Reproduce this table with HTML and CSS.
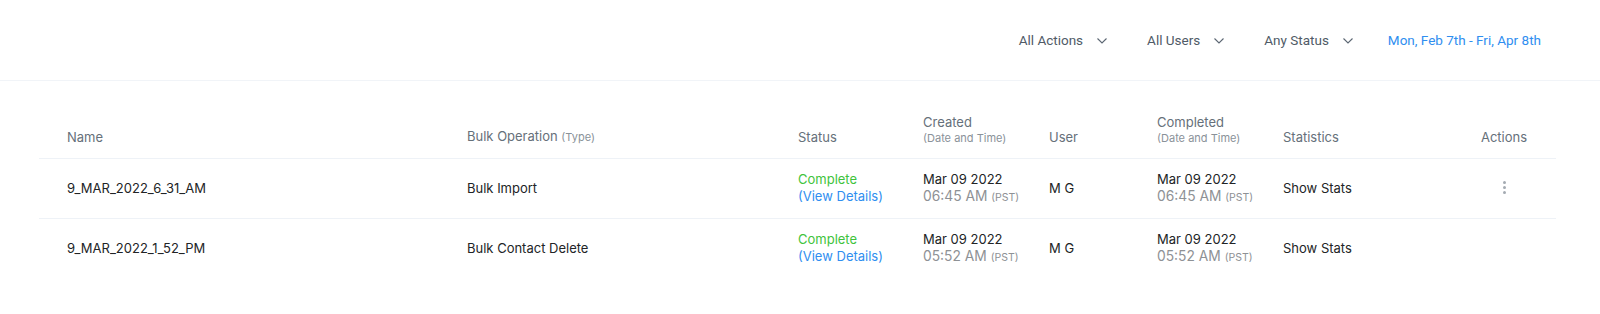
FILE: index.html
```html
<!DOCTYPE html>
<html>
<head>
<meta charset="utf-8">
<link rel="stylesheet" href="styles.css">
</head>
<body>
<header class="topbar">
  <div class="filters">
    <div class="filter">All Actions <svg class="chev" viewBox="0 0 10 6" width="10" height="6"><path d="M0.5 0.5 L5 5 L9.5 0.5" fill="none" stroke="#5b6672" stroke-width="1.1"/></svg></div>
    <div class="filter">All Users <svg class="chev" viewBox="0 0 10 6" width="10" height="6"><path d="M0.5 0.5 L5 5 L9.5 0.5" fill="none" stroke="#5b6672" stroke-width="1.1"/></svg></div>
    <div class="filter">Any Status <svg class="chev" viewBox="0 0 10 6" width="10" height="6"><path d="M0.5 0.5 L5 5 L9.5 0.5" fill="none" stroke="#5b6672" stroke-width="1.1"/></svg></div>
    <div class="daterange">Mon, Feb 7th - Fri, Apr 8th</div>
  </div>
</header>
<main class="content">
  <table class="ops">
    <colgroup>
      <col class="c-name"><col class="c-op"><col class="c-status"><col class="c-created"><col class="c-user"><col class="c-completed"><col class="c-stats"><col class="c-actions">
    </colgroup>
    <thead>
      <tr>
        <th class="first">Name</th>
        <th>Bulk Operation <span class="sub-inline">(Type)</span></th>
        <th>Status</th>
        <th><span class="main">Created</span><span class="sub">(Date and Time)</span></th>
        <th>User</th>
        <th><span class="main">Completed</span><span class="sub">(Date and Time)</span></th>
        <th>Statistics</th>
        <th class="center">Actions</th>
      </tr>
    </thead>
    <tbody>
      <tr>
        <td class="first">9_MAR_2022_6_31_AM</td>
        <td>Bulk Import</td>
        <td><span class="ok">Complete</span><a class="link">(View Details)</a></td>
        <td><span class="date">Mar 09 2022</span><span class="time">06:45 AM <small>(PST)</small></span></td>
        <td>M G</td>
        <td><span class="date">Mar 09 2022</span><span class="time">06:45 AM <small>(PST)</small></span></td>
        <td>Show Stats</td>
        <td class="center"><span class="kebab"><i></i><i></i><i></i></span></td>
      </tr>
      <tr>
        <td class="first">9_MAR_2022_1_52_PM</td>
        <td>Bulk Contact Delete</td>
        <td><span class="ok">Complete</span><a class="link">(View Details)</a></td>
        <td><span class="date">Mar 09 2022</span><span class="time">05:52 AM <small>(PST)</small></span></td>
        <td>M G</td>
        <td><span class="date">Mar 09 2022</span><span class="time">05:52 AM <small>(PST)</small></span></td>
        <td>Show Stats</td>
        <td class="center"></td>
      </tr>
    </tbody>
  </table>
</main>
</body>
</html>
```
FILE: styles.css
```css
html, body {
  margin: 0;
  padding: 0;
  background: #ffffff;
}
body {
  font-family: Inter, "Noto Sans", sans-serif;
  color: #222426;
}
.topbar {
  height: 80px;
  border-bottom: 1px solid #f1f4f8;
  display: flex;
  align-items: center;
  justify-content: flex-end;
  padding-right: 59px;
}
.filters {
  display: flex;
  align-items: center;
  font-family: Roboto, "Liberation Sans", sans-serif;
  font-size: 13.5px;
  color: #505b67;
}
.filter {
  display: flex;
  align-items: center;
  margin-right: 40px;
}
.filter:nth-child(3) {
  margin-right: 35px;
}
.chev {
  margin-left: 14px;
  margin-top: 2px;
}
.daterange {
  color: #2f8ef0;
}
.content {
  padding: 24px 44px 0 39px;
}
.ops {
  width: 1517px;
  table-layout: fixed;
  border-collapse: collapse;
  font-size: 13px;
}
.c-name { width: 428px; }
.c-op { width: 331px; }
.c-status { width: 125px; }
.c-created { width: 126px; }
.c-user { width: 108px; }
.c-completed { width: 126px; }
.c-stats { width: 169px; }
.c-actions { width: 104px; }
.ops th {
  height: 53px;
  padding: 0 0 12px 0;
  vertical-align: bottom;
  text-align: left;
  font-weight: 400;
  color: #66707a;
  line-height: 18px;
  box-sizing: border-box;
}
.ops th .main {
  display: block;
  line-height: 16px;
}
.ops th .sub {
  display: block;
  font-size: 11px;
  line-height: 16px;
  color: #8a9299;
}
.sub-inline {
  font-size: 11px;
  color: #8a9299;
}
.ops .first {
  padding-left: 28px;
}
.ops .center {
  text-align: center;
}
.ops td {
  height: 60px;
  padding: 0;
  border-top: 1px solid #eef2f7;
  vertical-align: middle;
  line-height: 17px;
  box-sizing: border-box;
}
.ok {
  display: block;
  color: #3fc33d;
}
.link {
  display: block;
  color: #2f8ef0;
}
.date {
  display: block;
  color: #222426;
}
.time {
  display: block;
  color: #8e9195;
  font-size: 13.8px;
}
.time small {
  font-size: 10.5px;
}
.kebab {
  display: inline-flex;
  flex-direction: column;
  gap: 2px;
  vertical-align: middle;
  margin-top: -2px;
}
.kebab i {
  display: block;
  width: 3px;
  height: 3px;
  border-radius: 50%;
  background: #a4abb2;
}
```
